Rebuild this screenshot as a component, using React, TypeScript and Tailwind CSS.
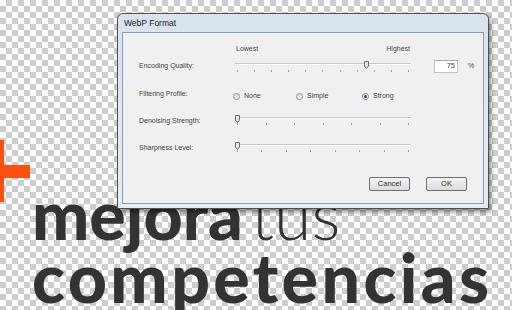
import React from "react";

function Ticks({ n }: { n: number }) {
  return (
    <div className="flex justify-between px-[2px]">
      {Array.from({ length: n }).map((_, i) => (
        <div key={i} className="w-px h-[2px] bg-[#a0a0a0]" />
      ))}
    </div>
  );
}

function Thumb({ pos }: { pos: number }) {
  return (
    <svg
      className="absolute top-[-3px]"
      style={{ left: 2 + pos * 172 - 2 }}
      width="5"
      height="8"
      viewBox="0 0 5 8"
    >
      <path d="M0.5 0.5 H4.5 V5 L2.5 7.5 L0.5 5 Z" fill="#e6e6e6" stroke="#6e6e6e" strokeWidth="1" />
    </svg>
  );
}

function Slider({ n, pos, gap }: { n: number; pos: number; gap: string }) {
  return (
    <div className="w-[176px] shrink-0 flex flex-col">
      <div className="relative h-[2px] border-t border-[#c8c8c8] bg-white">
        <Thumb pos={pos} />
      </div>
      <div className={gap}>
        <Ticks n={n} />
      </div>
    </div>
  );
}

function Radio({ checked, label, w }: { checked?: boolean; label: string; w: string }) {
  return (
    <div className={`flex items-center gap-[4px] shrink-0 ${w}`}>
      <div className="w-[7px] h-[7px] rounded-full border border-[#8e8f8f] bg-gradient-to-br from-[#d8d8d8] to-[#f8f8f8] flex items-center justify-center">
        {checked && <div className="w-[3px] h-[3px] rounded-full bg-[#1b5aa8]" />}
      </div>
      <span>{label}</span>
    </div>
  );
}

function Button({ label }: { label: string }) {
  return (
    <div className="w-[41px] h-[14px] rounded-[2px] border border-[#707070] bg-gradient-to-b from-[#f4f4f4] to-[#dcdcdc] flex items-center justify-center">
      {label}
    </div>
  );
}

export default function App() {
  return (
    <div className="relative w-[512px] h-[310px] overflow-hidden [background:repeating-conic-gradient(#cdcdcd_0_25%,#ffffff_0_50%)_0_0/12px_12px]">
      {/* orange plus */}
      <div className="absolute left-[-9px] top-[140px] w-[13px] h-[62px] bg-[#fd4f10]" />
      <div className="absolute left-[-36px] top-[165px] w-[66px] h-[13px] bg-[#fd4f10]" />

      {/* headline */}
      <div className="pl-[32px] pt-[185px] font-[Lato,sans-serif] text-[#333333] text-[68px] leading-[57px]">
        <div className="whitespace-nowrap">
          <span className="font-black">mejora</span>
          <span className="font-light ml-[8px]">tus</span>
        </div>
        <div className="font-black whitespace-nowrap mt-[6px] tracking-[3.4px]">competencias</div>
      </div>

      {/* dialog */}
      <div className="absolute left-[117px] top-[13px] w-[372px] h-[196px] rounded-t-[6px] border border-[#505050] bg-gradient-to-b from-[#d9e3ee] to-[#e7edf4] flex flex-col px-[4px] pb-[4px] shadow-[2px_3px_4px_rgba(0,0,0,0.45)] font-['Liberation_Sans',Arial,sans-serif]">
        <div className="h-[18px] flex items-center pl-[2px] text-[8.5px] text-[#1a1a1a]">WebP Format</div>
        <div className="flex-1 border border-[#8c9bb0] bg-[#f0f0f0] flex flex-col pl-[16px] pr-[8px] text-[7px] text-[#444444]">
          {/* Lowest / Highest */}
          <div className="mt-[11px] h-[10px] flex items-center">
            <div className="w-[96px] shrink-0" />
            <div className="w-[176px] shrink-0 flex justify-between pl-[1px] pr-[1px]">
              <span>Lowest</span>
              <span>Highest</span>
            </div>
          </div>
          {/* Encoding quality */}
          <div className="mt-[2px] h-[20px] flex items-center">
            <div className="w-[96px] shrink-0">Encoding Quality:</div>
            <div className="mt-[3px] shrink-0">
              <Slider n={11} pos={0.75} gap="mt-[5px]" />
            </div>
            <div className="ml-[23px] shrink-0 w-[24px] h-[13px] border border-[#c4c4c4] border-t-[#a8a8a8] bg-white flex items-center justify-end pr-[2px] text-[7.5px]">
              75
            </div>
            <div className="ml-[10px] shrink-0">%</div>
          </div>
          {/* Filtering profile */}
          <div className="mt-[10px] h-[20px] flex items-center">
            <div className="w-[96px] shrink-0 mb-[3px]">Filtering Profile:</div>
            <div className="flex items-center ml-[-2px]">
              <Radio label="None" w="w-[63px]" />
              <Radio label="Simple" w="w-[66px]" />
              <Radio label="Strong" checked w="w-[60px]" />
            </div>
          </div>
          {/* Denoising */}
          <div className="mt-[5px] h-[20px] flex items-center">
            <div className="w-[96px] shrink-0">Denoising Strength:</div>
            <div className="shrink-0">
              <Slider n={7} pos={0} gap="mt-[4px]" />
            </div>
          </div>
          {/* Sharpness */}
          <div className="mt-[7px] h-[20px] flex items-center">
            <div className="w-[96px] shrink-0">Sharpness Level:</div>
            <div className="shrink-0">
              <Slider n={8} pos={0} gap="mt-[4px]" />
            </div>
          </div>
          {/* buttons */}
          <div className="mt-[19px] mr-[8px] flex justify-end gap-[16px] text-[7.5px] text-[#333333]">
            <Button label="Cancel" />
            <Button label="OK" />
          </div>
        </div>
      </div>
    </div>
  );
}
